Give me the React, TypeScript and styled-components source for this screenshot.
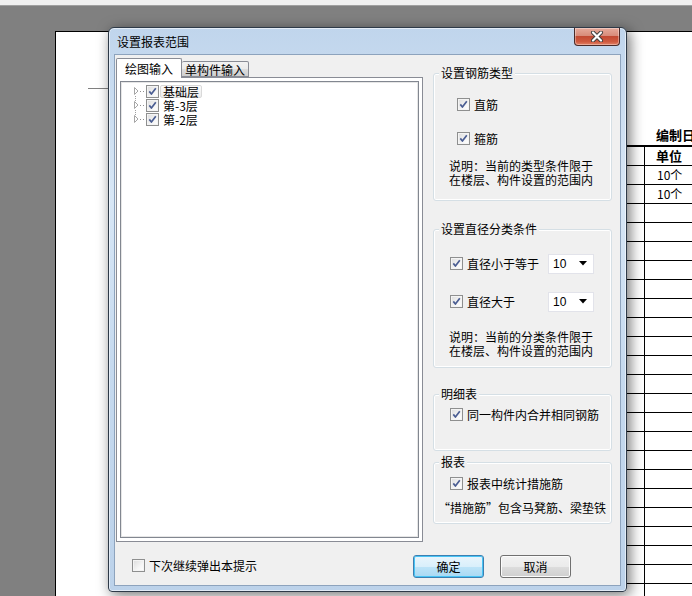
import styled, { createGlobalStyle } from 'styled-components'

const GlobalStyle = createGlobalStyle`
  html, body {
    margin: 0;
    padding: 0;
  }
  body {
    font-family: "Noto Sans CJK SC", "Liberation Sans", sans-serif;
    font-size: 12px;
    color: #000;
  }
  * {
    box-sizing: border-box;
  }
`

const floors = ['基础层', '第-3层', '第-2层']

function CheckBox({ checked = true }: { checked?: boolean }) {
  return (
    <Box>
      {checked && (
        <svg width="11" height="11" viewBox="0 0 11 11">
          <path
            d="M2.3 5.4 L4.4 8 L8.8 2.2"
            fill="none"
            stroke="#4a5d92"
            strokeWidth="1.7"
            strokeLinejoin="round"
          />
        </svg>
      )}
    </Box>
  )
}

function Expander({ first, last }: { first?: boolean; last?: boolean }) {
  return (
    <svg width="13" height="14" viewBox="0 0 13 14">
      {!first && (
        <line x1="2.5" y1="0" x2="2.5" y2="3" stroke="#a0a0a0" strokeDasharray="1 1" />
      )}
      {!last && (
        <line x1="2.5" y1="12" x2="2.5" y2="14" stroke="#a0a0a0" strokeDasharray="1 1" />
      )}
      <polygon points="1.5,3.5 5,7 1.5,10.5" fill="#fff" stroke="#a6a6a6" />
      <line x1="7" y1="7.5" x2="12" y2="7.5" stroke="#909090" strokeDasharray="1 2" />
    </svg>
  )
}

function Combo({ value }: { value: string }) {
  return (
    <Select>
      <span>{value}</span>
      <svg width="8" height="5" viewBox="0 0 8 5">
        <polygon points="0,0 8,0 4,4.5" fill="#000" />
      </svg>
    </Select>
  )
}

export default function App() {
  const rows = Array.from({ length: 24 }, (_, i) => i)

  return (
    <>
      <GlobalStyle />
      <Desktop lang="zh-CN">
        <TopStrip />
        <Paper>
          <RuleLine />
          <Report>
            <ReportHead>编制日期</ReportHead>
            <ReportTable>
              {rows.map((i) => (
                <ReportRow key={i}>
                  <ReportCell />
                  <ReportText bold={i === 0}>
                    {i === 0 ? '单位' : i < 3 ? '10个' : ''}
                  </ReportText>
                </ReportRow>
              ))}
            </ReportTable>
          </Report>
        </Paper>

        <Dialog>
          <TitleBar>
            <Title>设置报表范围</Title>
            <CloseButton>
              <svg width="14" height="11" viewBox="0 0 14 11">
                <path d="M3 1.5 L11 9.5 M11 1.5 L3 9.5" stroke="#3d3d3d" strokeWidth="4" strokeLinecap="round" />
                <path d="M3 1.5 L11 9.5 M11 1.5 L3 9.5" stroke="#fff" strokeWidth="2.2" strokeLinecap="round" />
              </svg>
            </CloseButton>
          </TitleBar>

          <ClientWrap>
            <Client>
              <MainRow>
                <TabControl>
                  <TabStrip>
                    <Tab active>绘图输入</Tab>
                    <Tab>单构件输入</Tab>
                  </TabStrip>
                  <TabPanel>
                    <Tree>
                      {floors.map((f, i) => (
                        <TreeItem key={f}>
                          <Expander first={i === 0} last={i === floors.length - 1} />
                          <CheckBox />
                          <TreeLabel focused={i === 0}>{f}</TreeLabel>
                        </TreeItem>
                      ))}
                    </Tree>
                  </TabPanel>
                </TabControl>

                <RightColumn>
                  <Group>
                    <GroupTitle>设置钢筋类型</GroupTitle>
                    <GroupBox height={128} padTop={23} padLeft={23}>
                      <CheckRow>
                        <CheckBox />
                        直筋
                      </CheckRow>
                      <CheckRow gapTop={19}>
                        <CheckBox />
                        箍筋
                      </CheckRow>
                      <Note gapTop={13} indent={-8}>
                        说明：当前的类型条件限于
                        <br />
                        在楼层、构件设置的范围内
                      </Note>
                    </GroupBox>
                  </Group>

                  <Group gapTop={21}>
                    <GroupTitle>设置直径分类条件</GroupTitle>
                    <GroupBox height={139} padTop={23} padLeft={16}>
                      <ComboRow>
                        <CheckRow>
                          <CheckBox />
                          直径小于等于
                        </CheckRow>
                        <Combo value="10" />
                      </ComboRow>
                      <ComboRow gapTop={17}>
                        <CheckRow>
                          <CheckBox />
                          直径大于
                        </CheckRow>
                        <Combo value="10" />
                      </ComboRow>
                      <Note gapTop={18} indent={-1}>
                        说明：当前的分类条件限于
                        <br />
                        在楼层、构件设置的范围内
                      </Note>
                    </GroupBox>
                  </Group>

                  <Group gapTop={19}>
                    <GroupTitle>明细表</GroupTitle>
                    <GroupBox height={57} padTop={12} padLeft={16}>
                      <CheckRow>
                        <CheckBox />
                        同一构件内合并相同钢筋
                      </CheckRow>
                    </GroupBox>
                  </Group>

                  <Group gapTop={4}>
                    <GroupTitle>报表</GroupTitle>
                    <GroupBox height={62} padTop={13} padLeft={16}>
                      <CheckRow>
                        <CheckBox />
                        报表中统计措施筋
                      </CheckRow>
                      <Note gapTop={10} indent={-12}>
                        “措施筋”包含马凳筋、梁垫铁
                      </Note>
                    </GroupBox>
                  </Group>
                </RightColumn>
              </MainRow>

              <BottomRow>
                <CheckRow>
                  <CheckBox checked={false} />
                  下次继续弹出本提示
                </CheckRow>
                <Buttons>
                  <Button primary>确定</Button>
                  <Button>取消</Button>
                </Buttons>
              </BottomRow>
            </Client>
          </ClientWrap>
        </Dialog>
      </Desktop>
    </>
  )
}

const Desktop = styled.div`
  position: relative;
  width: 692px;
  height: 596px;
  overflow: hidden;
  background: #808080;
  display: flex;
  flex-direction: column;
`

const TopStrip = styled.div`
  height: 6px;
  flex: none;
  background: #f0f0f0;
  border-bottom: 1px solid #a0a0a0;
`

const Paper = styled.div`
  flex: 1;
  margin: 25px 0 0 55px;
  background: #fff;
  border-top: 1px solid #000;
  border-left: 1px solid #000;
  display: flex;
  flex-direction: column;
`

const RuleLine = styled.div`
  margin: 56px 0 0 32px;
  width: 40px;
  height: 1px;
  background: #808080;
`

const Report = styled.div`
  margin: 38px 0 0 534px;
  display: flex;
  flex-direction: column;
`

const ReportHead = styled.div`
  padding-left: 66px;
  height: 16px;
  line-height: 16px;
  font-size: 13px;
  font-weight: bold;
  white-space: nowrap;
`

const ReportTable = styled.div`
  margin-top: 2px;
  border-top: 2px solid #000;
  display: flex;
  flex-direction: column;
`

const ReportRow = styled.div`
  display: flex;
  height: 19px;
  border-bottom: 1px solid #000;
`

const ReportCell = styled.div`
  width: 55px;
  flex: none;
  border-right: 1px solid #000;
`

const ReportText = styled.div<{ bold?: boolean }>`
  padding-left: ${(p) => (p.bold ? 11 : 12)}px;
  line-height: 18px;
  font-size: ${(p) => (p.bold ? 13 : 12)}px;
  font-weight: ${(p) => (p.bold ? 'bold' : 'normal')};
  white-space: nowrap;
`

const Dialog = styled.div`
  position: absolute;
  left: 108px;
  top: 27px;
  width: 519px;
  height: 565px;
  border: 1px solid #2e3a48;
  border-radius: 6px 6px 4px 4px;
  background: linear-gradient(180deg, #c0d5ec 0%, #d8e7f6 30%, #c6daef 60%, #bcd2ea 100%);
  box-shadow: inset 0 0 0 1px rgba(255, 255, 255, 0.55), 3px 3px 14px rgba(0, 0, 0, 0.55);
  display: flex;
  flex-direction: column;
`

const TitleBar = styled.div`
  height: 26px;
  flex: none;
  display: flex;
  justify-content: space-between;
  align-items: flex-start;
  padding-left: 8px;
`

const Title = styled.div`
  align-self: center;
  margin-top: 1px;
  font-size: 12px;
  line-height: 16px;
  color: #000;
`

const CloseButton = styled.div`
  width: 46px;
  height: 18px;
  margin-right: 6px;
  border: 1px solid #4a2a28;
  border-top: none;
  border-radius: 0 0 4px 4px;
  background: linear-gradient(180deg, #e6aa9b 0%, #d88c7a 45%, #c24a33 50%, #cf5a3f 80%, #e28266 100%);
  box-shadow: inset 0 0 0 1px rgba(255, 255, 255, 0.35);
  display: flex;
  align-items: center;
  justify-content: center;
`

const ClientWrap = styled.div`
  flex: 1;
  padding: 0 5px 5px;
  display: flex;
`

const Client = styled.div`
  flex: 1;
  border: 1px solid #8da3bd;
  background: #f0f0f0;
  display: flex;
  flex-direction: column;
`

const MainRow = styled.div`
  height: 490px;
  flex: none;
  display: flex;
  align-items: flex-start;
  padding-left: 1px;
`

const TabControl = styled.div`
  margin-top: 3px;
  width: 307px;
  height: 484px;
  display: flex;
  flex-direction: column;
`

const TabStrip = styled.div`
  height: 19px;
  flex: none;
  display: flex;
  align-items: flex-end;
`

const Tab = styled.div<{ active?: boolean }>`
  position: relative;
  z-index: ${(p) => (p.active ? 1 : 0)};
  height: ${(p) => (p.active ? 20 : 16)}px;
  margin-bottom: ${(p) => (p.active ? -1 : 0)}px;
  padding: ${(p) => (p.active ? '0 8px' : '0 3px')};
  border: 1px solid #898c95;
  border-bottom: ${(p) => (p.active ? 'none' : '1px solid #898c95')};
  border-left: ${(p) => (p.active ? '1px solid #898c95' : 'none')};
  border-radius: 2px 2px 0 0;
  background: ${(p) => (p.active ? '#fff' : 'linear-gradient(180deg, #f2f2f2 0%, #ebebeb 50%, #dddddd 51%, #cfcfcf 100%)')};
  line-height: ${(p) => (p.active ? 19 : 15)}px;
  font-size: 12px;
  white-space: nowrap;
`

const TabPanel = styled.div`
  flex: 1;
  border: 1px solid #898c95;
  background: #fff;
  padding: 3px;
  display: flex;
`

const Tree = styled.div`
  flex: 1;
  border: 1px solid #828790;
  box-shadow: inset 0 0 0 1px #e6e6e6;
  background: #fff;
  padding: 2px 0 0 12px;
  display: flex;
  flex-direction: column;
`

const TreeItem = styled.div`
  height: 14px;
  display: flex;
  align-items: center;
`

const TreeLabel = styled.span<{ focused?: boolean }>`
  margin-left: 1px;
  padding: 0 2px;
  height: 13px;
  line-height: 12px;
  border: 1px solid ${(p) => (p.focused ? '#d9d9d9' : 'transparent')};
  border-radius: 2px;
  background: ${(p) => (p.focused ? 'linear-gradient(180deg, #fbfbfb, #ececec)' : 'transparent')};
  font-size: 12px;
  white-space: nowrap;
`

const Box = styled.span`
  width: 13px;
  height: 13px;
  flex: none;
  border: 1px solid #8e8f8f;
  background: linear-gradient(135deg, #dcdcdc 0%, #f5f5f5 60%, #ffffff 100%);
  box-shadow: inset 0 0 0 1px #f4f4f4;
  display: flex;
  align-items: center;
  justify-content: center;
`

const RightColumn = styled.div`
  margin: 11px 0 0 10px;
  width: 179px;
  display: flex;
  flex-direction: column;
`

const Group = styled.div<{ gapTop?: number }>`
  margin-top: ${(p) => p.gapTop ?? 0}px;
  display: flex;
  flex-direction: column;
`

const GroupTitle = styled.div`
  position: relative;
  z-index: 1;
  align-self: flex-start;
  margin: 0 0 -7px 6px;
  padding: 0 2px;
  height: 14px;
  line-height: 14px;
  background: #f0f0f0;
  font-size: 12px;
  white-space: nowrap;
`

const GroupBox = styled.div<{ height: number; padTop: number; padLeft: number }>`
  height: ${(p) => p.height}px;
  padding: ${(p) => `${p.padTop}px 0 0 ${p.padLeft}px`};
  border: 1px solid #d5dfe5;
  border-radius: 3px;
  box-shadow: inset 0 0 0 1px #fff;
  display: flex;
  flex-direction: column;
`

const CheckRow = styled.div<{ gapTop?: number }>`
  margin-top: ${(p) => p.gapTop ?? 0}px;
  height: 15px;
  display: flex;
  align-items: center;
  gap: 4px;
  font-size: 12px;
  line-height: 15px;
  white-space: nowrap;
`

const ComboRow = styled.div<{ gapTop?: number }>`
  margin-top: ${(p) => p.gapTop ?? 0}px;
  width: 144px;
  height: 21px;
  display: flex;
  align-items: center;
  justify-content: space-between;
`

const Select = styled.div`
  width: 46px;
  height: 20px;
  border: 1px solid #e2e3ea;
  background: #fff;
  padding: 0 6px 0 4px;
  display: flex;
  align-items: center;
  justify-content: space-between;
  font-family: "Liberation Sans", sans-serif;
  font-size: 12px;
`

const Note = styled.div<{ gapTop: number; indent: number }>`
  margin: ${(p) => `${p.gapTop}px 0 0 ${p.indent}px`};
  line-height: 14px;
  font-size: 12px;
  white-space: nowrap;
`

const BottomRow = styled.div`
  flex: 1;
  display: flex;
  align-items: center;
  padding: 0 49px 0 17px;
`

const Buttons = styled.div`
  margin-left: auto;
  display: flex;
  gap: 16px;
  margin-top: 2px;
`

const Button = styled.div<{ primary?: boolean }>`
  width: 71px;
  height: 23px;
  border: 1px solid ${(p) => (p.primary ? '#3c7fb1' : '#707070')};
  border-radius: 3px;
  background: ${(p) =>
    p.primary
      ? 'linear-gradient(180deg, #e9f5fc 0%, #d9effb 50%, #bde4f8 51%, #a9d9f3 100%)'
      : 'linear-gradient(180deg, #f2f2f2 0%, #ebebeb 50%, #dddddd 51%, #cfcfcf 100%)'};
  box-shadow: ${(p) => (p.primary ? 'inset 0 0 0 1px #48c4f5' : 'inset 0 0 0 1px #fcfcfc')};
  display: flex;
  align-items: center;
  justify-content: center;
  font-size: 12px;
`
